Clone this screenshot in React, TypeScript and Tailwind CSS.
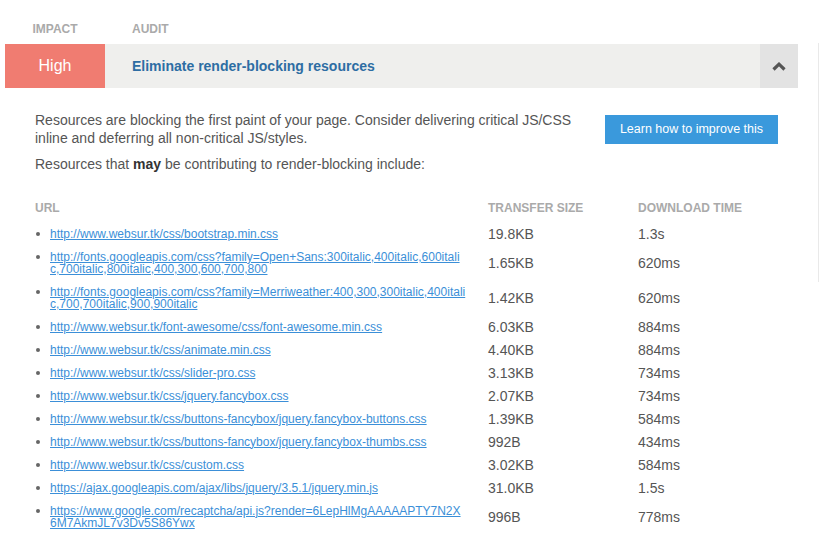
import React from "react";

const ROWS: { url: string; size: string; time: string }[] = [
  { url: "http://www.websur.tk/css/bootstrap.min.css", size: "19.8KB", time: "1.3s" },
  {
    url: "http://fonts.googleapis.com/css?family=Open+Sans:300italic,400italic,600italic,700italic,800italic,400,300,600,700,800",
    size: "1.65KB",
    time: "620ms",
  },
  {
    url: "http://fonts.googleapis.com/css?family=Merriweather:400,300,300italic,400italic,700,700italic,900,900italic",
    size: "1.42KB",
    time: "620ms",
  },
  { url: "http://www.websur.tk/font-awesome/css/font-awesome.min.css", size: "6.03KB", time: "884ms" },
  { url: "http://www.websur.tk/css/animate.min.css", size: "4.40KB", time: "884ms" },
  { url: "http://www.websur.tk/css/slider-pro.css", size: "3.13KB", time: "734ms" },
  { url: "http://www.websur.tk/css/jquery.fancybox.css", size: "2.07KB", time: "734ms" },
  { url: "http://www.websur.tk/css/buttons-fancybox/jquery.fancybox-buttons.css", size: "1.39KB", time: "584ms" },
  { url: "http://www.websur.tk/css/buttons-fancybox/jquery.fancybox-thumbs.css", size: "992B", time: "434ms" },
  { url: "http://www.websur.tk/css/custom.css", size: "3.02KB", time: "584ms" },
  { url: "https://ajax.googleapis.com/ajax/libs/jquery/3.5.1/jquery.min.js", size: "31.0KB", time: "1.5s" },
  {
    url: "https://www.google.com/recaptcha/api.js?render=6LepHlMgAAAAAPTY7N2X6M7AkmJL7v3Dv5S86Ywx",
    size: "996B",
    time: "778ms",
  },
];

export default function App() {
  return (
    <div className="flex w-[819px] h-[544px] overflow-hidden bg-white font-['Liberation_Sans',Arial,sans-serif] text-[#555]">
      <div className="w-[818px] flex-shrink-0 pl-[5px] pr-[20px]">
        {/* Column labels */}
        <div className="flex h-[44px] items-center pt-[13px] text-[12px] font-bold text-[#aaa] leading-none">
          <div className="w-[100px] text-center">IMPACT</div>
          <div className="pl-[27px]">AUDIT</div>
        </div>

        {/* Audit bar */}
        <div className="flex h-[44px]">
          <div className="w-[100px] flex items-center justify-center bg-[#f07c71] text-white text-[16px]">High</div>
          <div className="flex-1 flex items-center pl-[27px] bg-[#efefed] text-[14px] font-bold text-[#2d6da3]">
            Eliminate render-blocking resources
          </div>
          <div className="w-[38px] flex items-center justify-center bg-[#e3e3e3]">
            <svg width="14" height="9" viewBox="0 0 14 9">
              <polyline points="1.5,7.5 7,2.2 12.5,7.5" fill="none" stroke="#555" strokeWidth="3.2" />
            </svg>
          </div>
        </div>

        {/* Body */}
        <div className="pl-[30px] pt-[23px]">
          <div className="flex items-start">
            <div className="w-[555px] text-[14px] leading-[18px]">
              <p>
                Resources are blocking the first paint of your page. Consider delivering critical JS/CSS inline and
                deferring all non-critical JS/styles.
              </p>
              <p className="mt-[8px]">
                Resources that <b className="text-[#333]">may</b> be contributing to render-blocking include:
              </p>
            </div>
            <button className="ml-[15px] mt-[4px] w-[173px] h-[29px] bg-[#3a99dc] text-white text-[12.5px]">
              Learn how to improve this
            </button>
          </div>

          {/* Table */}
          <div className="mt-[28px] flex h-[14px] items-center text-[12px] font-bold text-[#aaa]">
            <div className="w-[453px]">URL</div>
            <div className="w-[150px]">TRANSFER SIZE</div>
            <div>DOWNLOAD TIME</div>
          </div>

          <div className="mt-[7px]">
            {ROWS.map((r) => (
              <div key={r.url} className="flex items-center py-[5.5px]">
                <div className="w-[453px] flex items-start">
                  <span className="w-[15px] flex-shrink-0 flex justify-start pl-[1px] pt-[4px]">
                    <span className="w-[4px] h-[4px] rounded-full bg-[#666]" />
                  </span>
                  <a className="w-[415.5px] break-all text-[12px] leading-[12px] text-[#3b8fd8] underline">
                    {r.url}
                  </a>
                </div>
                <div className="w-[150px] text-[14px] leading-[12px]">{r.size}</div>
                <div className="text-[14px] leading-[12px]">{r.time}</div>
              </div>
            ))}
          </div>
        </div>
      </div>
      <div className="w-[1px] flex-shrink-0">
        <div className="mt-[43px] h-[239px] bg-[#e9e9e9]" />
      </div>
    </div>
  );
}
